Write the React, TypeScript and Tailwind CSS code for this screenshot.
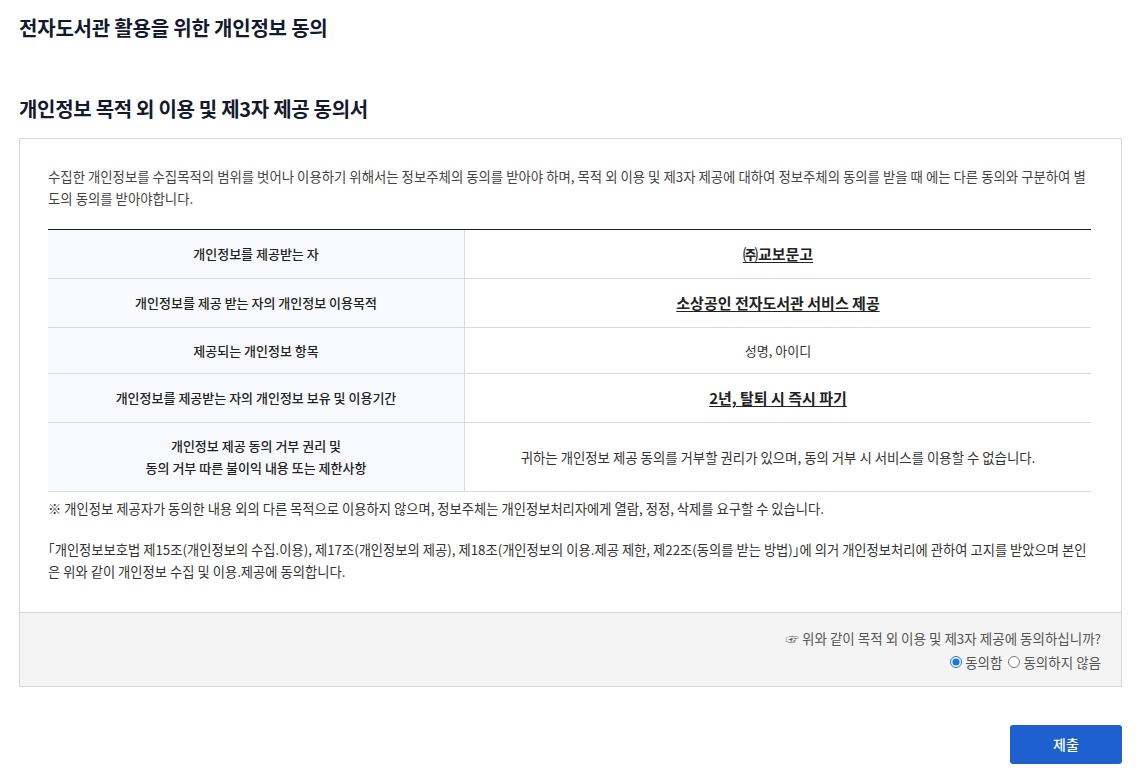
import React, { useState } from "react";

const font = { fontFamily: '"Noto Sans CJK KR", "Noto Sans", sans-serif' };

export default function App() {
  const [agree, setAgree] = useState(true);
  const rows: { label: React.ReactNode; value: React.ReactNode; h: string }[] = [
    {
      label: "개인정보를 제공받는 자",
      value: <span className="font-bold text-[15px] underline underline-offset-2 text-[#222]">㈜교보문고</span>,
      h: "h-[49px]",
    },
    {
      label: "개인정보를 제공 받는 자의 개인정보 이용목적",
      value: <span className="font-bold text-[15px] underline underline-offset-2 text-[#222]">소상공인 전자도서관 서비스 제공</span>,
      h: "h-[49px]",
    },
    {
      label: "제공되는 개인정보 항목",
      value: <span className="text-[13px] text-[#333]">성명, 아이디</span>,
      h: "h-[46px]",
    },
    {
      label: "개인정보를 제공받는 자의 개인정보 보유 및 이용기간",
      value: <span className="font-bold text-[15px] underline underline-offset-2 text-[#222]">2년, 탈퇴 시 즉시 파기</span>,
      h: "h-[49px]",
    },
    {
      label: (
        <>
          개인정보 제공 동의 거부 권리 및
          <br />
          동의 거부 따른 불이익 내용 또는 제한사항
        </>
      ),
      value: (
        <span className="text-[13.4px] text-[#333]">
          귀하는 개인정보 제공 동의를 거부할 권리가 있으며, 동의 거부 시 서비스를 이용할 수 없습니다.
        </span>
      ),
      h: "h-[69px]",
    },
  ];

  return (
    <div className="min-h-[781px] w-[1142px] bg-white text-[#222]" style={font}>
      <div className="pl-[19px] pr-[20px] pt-[14px]">
        <h1 className="text-[20px] font-bold text-[#141a2e] leading-[28px] tracking-[-0.2px]">
          전자도서관 활용을 위한 개인정보 동의
        </h1>
        <h2 className="mt-[52px] text-[20px] font-bold text-[#141a2e] leading-[30px] tracking-[-0.3px]">
          개인정보 목적 외 이용 및 제3자 제공 동의서
        </h2>

        <div className="mt-[14px] border border-[#d4d8dc]">
          <div className="pl-[28px] pr-[30px] pt-[26px] pb-[29px]">
            <p className="text-[13.4px] leading-[22px] text-[#444]">
              수집한 개인정보를 수집목적의 범위를 벗어나 이용하기 위해서는 정보주체의 동의를 받아야 하며, 목적 외 이용 및 제3자 제공에 대하여 정보주체의 동의를 받을 때 에는 다른 동의와 구분하여 별도의 동의를 받아야합니다.
            </p>

            <div className="mt-[20px] border-t border-[#141a3a]">
              {rows.map((r, i) => (
                <div key={i} className={`flex border-b border-[#d8dce0] ${r.h}`}>
                  <div className="w-[417px] shrink-0 bg-[#f8f9fe] border-r border-[#d8dce0] flex items-center justify-center text-center text-[13px] font-medium leading-[22px] text-[#222]">
                    <div>{r.label}</div>
                  </div>
                  <div className="flex-1 flex items-center justify-center text-center leading-[22px]">
                    {r.value}
                  </div>
                </div>
              ))}
            </div>

            <p className="mt-[6px] text-[13.3px] leading-[22px] text-[#333]">
              ※ 개인정보 제공자가 동의한 내용 외의 다른 목적으로 이용하지 않으며, 정보주체는 개인정보처리자에게 열람, 정정, 삭제를 요구할 수 있습니다.
            </p>
            <p className="mt-[19px] text-[13.3px] leading-[22px] text-[#333]">
              ｢개인정보보호법 제15조(개인정보의 수집.이용), 제17조(개인정보의 제공), 제18조(개인정보의 이용.제공 제한, 제22조(동의를 받는 방법)｣에 의거 개인정보처리에 관하여 고지를 받았으며 본인은 위와 같이 개인정보 수집 및 이용.제공에 동의합니다.
            </p>
          </div>

          <div className="border-t border-[#d4d8dc] bg-[#f4f4f4] h-[74px] pl-[19px] pr-[20px] pt-[13px] flex flex-col items-end text-[13.5px] leading-[24px] text-[#555]">
            <div>☞ 위와 같이 목적 외 이용 및 제3자 제공에 동의하십니까?</div>
            <div className="flex items-center gap-[6px]">
              <label className="flex items-center gap-[3px] cursor-pointer">
                <input
                  type="radio"
                  name="agree"
                  checked={agree}
                  onChange={() => setAgree(true)}
                  className="w-[12px] h-[12px] accent-[#1a73e8] m-0"
                />
                <span>동의함</span>
              </label>
              <label className="flex items-center gap-[3px] cursor-pointer">
                <input
                  type="radio"
                  name="agree"
                  checked={!agree}
                  onChange={() => setAgree(false)}
                  className="w-[12px] h-[12px] accent-[#1a73e8] m-0"
                />
                <span>동의하지 않음</span>
              </label>
            </div>
          </div>
        </div>

        <div className="mt-[38px] flex justify-end">
          <button className="w-[112px] h-[39px] rounded-[3px] bg-[#1e60d0] text-white text-[14px] font-medium">
            제출
          </button>
        </div>
      </div>
    </div>
  );
}
